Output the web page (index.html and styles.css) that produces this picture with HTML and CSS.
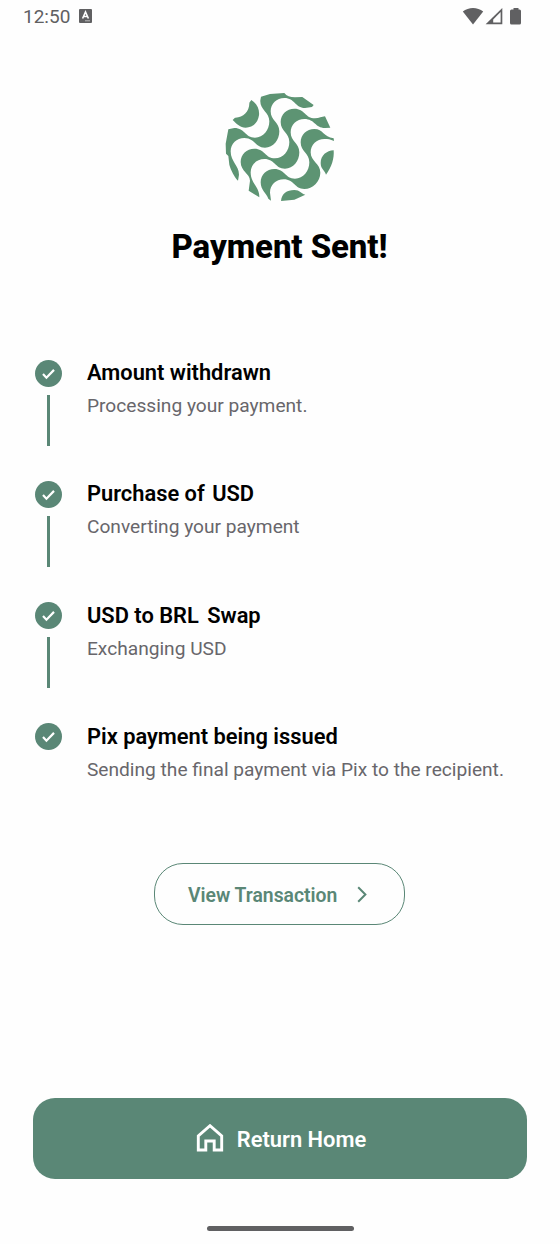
FILE: index.html
```html
<!DOCTYPE html>
<html lang="en">
<head>
<meta charset="utf-8">
<title>Payment Sent</title>
<link rel="stylesheet" href="styles.css">
</head>
<body>
<div class="screen">
  <header class="status">
    <span class="time">12:50</span>
    <svg class="app-badge" viewBox="0 0 13 14"><rect width="13" height="14" rx="1" fill="#606062"/><path d="M3.6 9.5 6.5 3l2.9 6.5M4.7 7.5h3.6" fill="none" stroke="#fff" stroke-width="1.6"/><path d="M6 11.8h5" stroke="#bbb" stroke-width="1"/></svg>
    <svg class="signals" viewBox="0 0 64 20"><path d="M.8 4.6C6.500-.1 15.500-.1 21.200 4.600L11 17.500Z" fill="#606062"/><path d="M23.600 17.300 40.300 1v16.300Z" fill="#606062"/><path d="M31.200 15.600V12.400L38.600 4.900v10.700Z" fill="#fefefe"/><path d="M51.500 1h5v1.500h1q1.500 0 1.500 1.500v12q0 1.500-1.500 1.500h-8Q48 17.500 48 16V4q0-1.500 1.500-1.500h2Z" fill="#606062"/></svg>
  </header>

  <main class="content">
    <svg class="logo" viewBox="0 0 390 390" fill="#5d9473">
      <path d="M109 54C126 65 134 82 132 100C128 127 109 137 92 137C75 136 66 127 53 114L60 107C84 108 104 88 103 62Z"/>
      <path d="M138 44L165 36L208 33C215 42 225 46 240 46L262 45L296 69L291 75L270 78C240 78 240 48 208 48c-23 0-41 17-41 40c0 28 26 32 26 60c0 27-18 49-43 49c-30 0-30-29-62-29c-23 0-41 17-41 40C47 240 72 250 72 278L69 296C58 285 48 265 43 248L40 222L33 215L32 185L40 142L58 138c32 0 32 29 62 29c25 0 43-22 43-49C163 90 134 84 136 55Z"/>
      <path d="M330 103C320 104 313 109 300 109C270 109 270 80 238 80c-23 0-41 17-41 40c0 28 26 32 26 60c0 27-18 49-43 49c-30 0-30-29-62-29c-23 0-41 17-41 40C77 268 105 275 105 296L101 326L133 346C134 315 107 305 107 271c0-23 18-40 41-40c32 0 32 29 62 29c25 0 43-22 43-49c0-28-26-32-26-60c0-23 18-40 41-40C300 111 300 138 330 138L346 137Z"/>
      <path d="M357 177C345 172 340 171 328 171c-23 0-41 17-41 40C287 239 316 244 316 272C316 299 293 321 268 321c-30 0-30-29-62-29c-23 0-41 17-41 40L168 356L160 350C155 335 137 325 137 301c0-23 18-40 41-40c32 0 32 29 62 29c25 0 43-22 43-49c0-28-26-32-26-60c0-23 18-40 41-40C325 141 325 165 356 169Z"/>
      <path d="M356 205C335 206 317 220 317 243C317 262 330 265 333 278C350 255 358 230 356 205Z"/>
      <path d="M198 357C200 335 215 324 238 324C255 324 258 335 271 338L238 353Z"/>
    </svg>
    <h1 class="title"><svg class="fit-text" viewBox="0 0 216 44"><text x="-0.500" y="33" textLength="216">Payment Sent!</text></svg></h1>

    <ol class="steps">
      <li class="step">
        <div class="rail"><svg class="check" viewBox="0 0 26 26"><circle cx="13" cy="13" r="13"/><path d="m7.700 13.400 3.300 3.600 7.300-7.500"/></svg><span class="line"></span></div>
        <div class="copy"><h2 class="name">Amount withdrawn</h2><p class="detail">Processing your payment.</p></div>
      </li>
      <li class="step">
        <div class="rail"><svg class="check" viewBox="0 0 26 26"><circle cx="13" cy="13" r="13"/><path d="m7.700 13.400 3.300 3.600 7.300-7.500"/></svg><span class="line"></span></div>
        <div class="copy"><h2 class="name">Purchase of <span class="shift">USD</span></h2><p class="detail">Converting your payment</p></div>
      </li>
      <li class="step">
        <div class="rail"><svg class="check" viewBox="0 0 26 26"><circle cx="13" cy="13" r="13"/><path d="m7.700 13.400 3.300 3.600 7.300-7.500"/></svg><span class="line"></span></div>
        <div class="copy"><h2 class="name">USD to BRL <span class="shift wide">Swap</span></h2><p class="detail">Exchanging USD</p></div>
      </li>
      <li class="step">
        <div class="rail"><svg class="check" viewBox="0 0 26 26"><circle cx="13" cy="13" r="13"/><path d="m7.700 13.400 3.300 3.600 7.300-7.500"/></svg></div>
        <div class="copy"><h2 class="name">Pix payment being issued</h2><p class="detail">Sending the final payment via Pix to the recipient.</p></div>
      </li>
    </ol>

    <button class="view"><span class="view-label">View Transaction</span><svg class="chevron" viewBox="0 0 10 17"><path d="m1.200 1.200 7.200 7.300-7.200 7.300"/></svg></button>
  </main>

  <footer class="footer">
    <button class="home"><svg class="house" viewBox="0 0 28 28"><path d="M2.300 26V11.800L14 1.700l11.700 10.100V26h-7.500v-9h-8.400v9Z"/></svg><span class="home-label">Return Home</span></button>
    <div class="handle"></div>
  </footer>
</div>
</body>
</html>
```
FILE: styles.css
```css
* { box-sizing: border-box; }
body { margin: 0; background: #fefefe; font-family: Roboto, "Liberation Sans", sans-serif; color: #000; }
h1, h2, p, ol { margin: 0; padding: 0; }
button { border: 0; font-family: inherit; }
svg { display: block; flex: none; }
.screen { width: 560px; height: 1244px; display: flex; flex-direction: column; overflow: hidden; }
.status { height: 32px; padding: 0 34px 0 23px; display: flex; align-items: center; color: #606062; }
.time { font-size: 19px; line-height: 32px; width: 56px; padding-top: 1px; }
.app-badge { width: 13px; height: 14px; }
.signals { width: 64px; height: 20px; margin: 1px 0 0 auto; }
.content { display: flex; flex-direction: column; align-items: center; }
.logo { width: 130px; height: 130px; margin-top: 50px; }
.title { height: 44px; margin-top: 13px; }
.fit-text { width: 216px; height: 44px; overflow: visible; font-size: 33px; font-weight: 800; }
.steps { width: 100%; padding: 90.500px 35.400px 0; list-style: none; }
.step { display: flex; gap: 24.600px; height: 121.300px; }
.rail { width: 27px; display: flex; flex-direction: column; align-items: center; }
.check { width: 27px; height: 27px; fill: #5a8776; }
.check path { fill: none; stroke: #fff; stroke-width: 2.100; }
.line { width: 3px; height: 51px; margin-top: 8px; background: #5a8776; }
.copy { margin-top: -0.500px; }
.name { font-size: 21.850px; font-weight: 600; line-height: 27px; white-space: nowrap; }
.shift { margin-left: 2px; }
.wide { margin-left: 3px; }
.detail { margin-top: 6px; font-size: 19.150px; line-height: 27px; color: #68666b; white-space: nowrap; }
.view { width: 251px; height: 62px; margin: 18.500px 1px 0 0; padding: 1px 37px 0 33px; display: flex; align-items: center; justify-content: space-between; border: 1.500px solid #5a8776; border-radius: 29px; background: transparent; color: #5a8776; font-size: 19.350px; font-weight: 600; }
.view-label { padding-top: 1px; }
.chevron { width: 10px; height: 17px; fill: none; stroke: #5a8776; stroke-width: 2; }
.footer { margin-top: auto; padding: 0 33px 13.500px; display: flex; flex-direction: column; align-items: center; }
.home { width: 494px; height: 81px; padding: 0 0 0 2px; display: flex; align-items: center; justify-content: center; gap: 13px; border-radius: 22px; background: #5a8776; color: #fff; font-size: 21.900px; font-weight: 600; }
.home-label { padding-top: 2px; }
.house { width: 28px; height: 28px; fill: none; stroke: #fff; stroke-width: 2.900; }
.handle { width: 147px; height: 5px; margin-top: 47px; border-radius: 3px; background: #606062; }
```
